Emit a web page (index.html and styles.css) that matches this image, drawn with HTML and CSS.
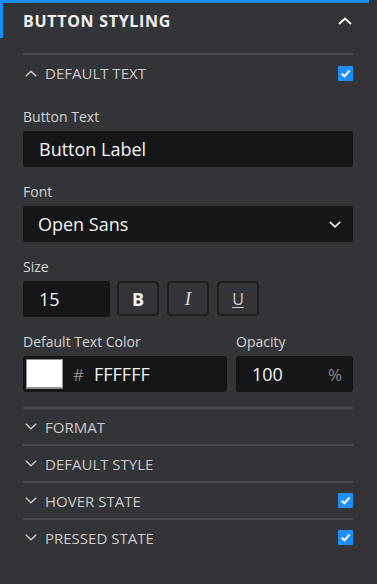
FILE: index.html
```html
<!DOCTYPE html>
<html>
<head>
<meta charset="utf-8">
<link rel="stylesheet" href="styles.css">
</head>
<body>
<div class="panel">
  <div class="panel-head">
    <span class="panel-title">BUTTON STYLING</span>
    <svg class="head-chev" width="14" height="8" viewBox="0 0 14 8"><polyline points="1,7 7,1.5 13,7" fill="none" stroke="#f2f2f2" stroke-width="2"/></svg>
  </div>
  <div class="sections">
    <div class="section">
      <div class="sec-row first">
        <svg class="chev" width="12" height="7" viewBox="0 0 12 7"><polyline points="0.8,6.2 6,1.2 11.2,6.2" fill="none" stroke="#c8c8c8" stroke-width="1.5"/></svg>
        <span class="sec-title">DEFAULT TEXT</span>
        <svg class="check" width="15" height="15" viewBox="0 0 15 15"><rect width="15" height="15" rx="1" fill="#1e8ff5"/><polyline points="3.6,7.6 6.4,10.3 11.5,4.6" fill="none" stroke="#fff" stroke-width="2"/></svg>
      </div>
      <div class="sec-body">
        <div class="field">
          <div class="label">Button Text</div>
          <div class="input">Button Label</div>
        </div>
        <div class="field">
          <div class="label">Font</div>
          <div class="input select">
            <span>Open Sans</span>
            <svg width="12" height="7" viewBox="0 0 12 7"><polyline points="0.8,0.8 6,5.8 11.2,0.8" fill="none" stroke="#f0f0f0" stroke-width="1.6"/></svg>
          </div>
        </div>
        <div class="field">
          <div class="label">Size</div>
          <div class="size-row">
            <div class="input size">15</div>
            <div class="fmt bold">B</div>
            <div class="fmt ital">I</div>
            <div class="fmt under">U</div>
          </div>
        </div>
        <div class="field color-field">
          <div class="col">
            <div class="label">Default Text Color</div>
            <div class="input color">
              <span class="swatch"></span>
              <span class="hash">#</span>
              <span>FFFFFF</span>
            </div>
          </div>
          <div class="col">
            <div class="label">Opacity</div>
            <div class="input opacity">
              <span>100</span>
              <span class="pct">%</span>
            </div>
          </div>
        </div>
      </div>
    </div>
    <div class="section">
      <div class="sec-row">
        <svg class="chev" width="12" height="7" viewBox="0 0 12 7"><polyline points="0.8,0.8 6,5.8 11.2,0.8" fill="none" stroke="#c8c8c8" stroke-width="1.5"/></svg>
        <span class="sec-title">FORMAT</span>
      </div>
    </div>
    <div class="section">
      <div class="sec-row">
        <svg class="chev" width="12" height="7" viewBox="0 0 12 7"><polyline points="0.8,0.8 6,5.8 11.2,0.8" fill="none" stroke="#c8c8c8" stroke-width="1.5"/></svg>
        <span class="sec-title">DEFAULT STYLE</span>
      </div>
    </div>
    <div class="section">
      <div class="sec-row">
        <svg class="chev" width="12" height="7" viewBox="0 0 12 7"><polyline points="0.8,0.8 6,5.8 11.2,0.8" fill="none" stroke="#c8c8c8" stroke-width="1.5"/></svg>
        <span class="sec-title">HOVER STATE</span>
        <svg class="check" width="15" height="15" viewBox="0 0 15 15"><rect width="15" height="15" rx="1" fill="#1e8ff5"/><polyline points="3.6,7.6 6.4,10.3 11.5,4.6" fill="none" stroke="#fff" stroke-width="2"/></svg>
      </div>
    </div>
    <div class="section">
      <div class="sec-row">
        <svg class="chev" width="12" height="7" viewBox="0 0 12 7"><polyline points="0.8,0.8 6,5.8 11.2,0.8" fill="none" stroke="#c8c8c8" stroke-width="1.5"/></svg>
        <span class="sec-title">PRESSED STATE</span>
        <svg class="check" width="15" height="15" viewBox="0 0 15 15"><rect width="15" height="15" rx="1" fill="#1e8ff5"/><polyline points="3.6,7.6 6.4,10.3 11.5,4.6" fill="none" stroke="#fff" stroke-width="2"/></svg>
      </div>
    </div>
  </div>
</div>
</body>
</html>
```

FILE: styles.css
```css
* { box-sizing: border-box; }
html, body {
  margin: 0;
  padding: 0;
  background: #333437;
  height: 100%;
}
body {
  font-family: "Open Sans", "Noto Sans", sans-serif;
  color: #d2d2d2;
}
.panel {
  width: 369px;
}
.panel-head {
  height: 38px;
  border-top: 3px solid #1a8cf5;
  border-left: 3px solid #1a8cf5;
  padding: 0 17px 0 20px;
  display: flex;
  align-items: center;
  justify-content: space-between;
}
.panel-title {
  font-size: 16px;
  font-weight: 700;
  letter-spacing: 0.7px;
  color: #f0f0f0;
}
.head-chev { margin-top: 1px; }
.sections {
  padding: 15px 16px 0 23px;
}
.section {
  border-top: 2px solid #4a4b4f;
}
.sec-row {
  height: 35px;
  display: flex;
  align-items: center;
  padding-left: 2px;
}
.sec-row.first { height: 36px; }
.chev { margin-right: 8px; flex: none; }
.sec-title {
  font-size: 15px;
  color: #c9c9c9;
  flex: 1;
}
.check { flex: none; }
.sec-body {
  padding: 16px 0 15px;
  display: flex;
  flex-direction: column;
  gap: 15px;
}
.label {
  font-size: 14px;
  line-height: 20px;
  margin-bottom: 4px;
  color: #d3d3d3;
}
.input {
  height: 36px;
  background: #151618;
  border-radius: 3px;
  padding: 0 16px;
  display: flex;
  align-items: center;
  font-size: 18px;
  color: #f4f4f4;
}
.select {
  justify-content: space-between;
  padding-left: 15px;
  padding-right: 12px;
}
.size-row {
  display: flex;
  gap: 8px;
}
.size {
  width: 87px;
  margin-right: -1px;
}
.fmt {
  width: 42px;
  height: 35px;
  border: 2px solid #1d1e20;
  border-radius: 4px;
  display: flex;
  align-items: center;
  justify-content: center;
  color: #e8e8e8;
}
.bold {
  font-weight: 700;
  font-size: 18px;
  color: #f4f4f4;
}
.ital {
  font-family: "Liberation Serif", serif;
  font-style: italic;
  font-size: 19px;
  color: #d8d8d8;
}
.under {
  font-size: 16px;
  text-decoration: underline;
  text-underline-offset: 2px;
  color: #d0d0d0;
}
.color-field {
  display: grid;
  grid-template-columns: 1fr 117px;
  gap: 9px;
}
.color {
  padding-left: 3px;
}
.swatch {
  width: 37px;
  height: 30px;
  background: #fff;
  border: 1px solid #8e8f92;
  border-bottom-width: 2px;
  margin-right: 10px;
}
.hash {
  color: #8a8a8a;
  font-size: 17px;
  margin-right: 10px;
}
.opacity {
  justify-content: space-between;
  padding-right: 11px;
}
.pct {
  color: #8a8a8a;
  font-size: 17px;
}
```
